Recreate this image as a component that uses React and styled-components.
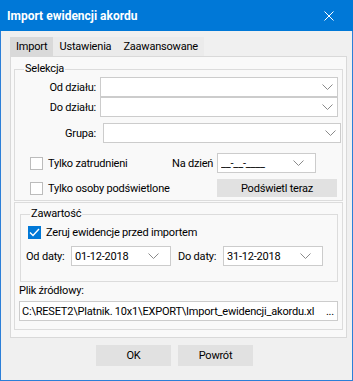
import React from 'react';
import styled, { createGlobalStyle } from 'styled-components';

const GlobalStyle = createGlobalStyle`
  html, body { margin: 0; padding: 0; }
  body {
    background: #f0f0f0;
    font-family: Roboto, "Liberation Sans", Arial, sans-serif;
    font-size: 11px;
    letter-spacing: -0.2px;
    color: #000;
  }
  * { box-sizing: border-box; }
`;

const Window = styled.div`
  width: 353px;
  height: 381px;
  display: flex;
  flex-direction: column;
  background: #f0f0f0;
  overflow: hidden;
`;

const TitleBar = styled.div`
  height: 31px;
  flex: none;
  background: #0078d7;
  color: #fff;
  display: flex;
  align-items: center;
  padding: 0 19px 0 7px;
`;

const Title = styled.div`
  flex: 1;
  font-weight: bold;
  font-size: 12px;
  letter-spacing: 0;
  white-space: nowrap;
`;

const Client = styled.div`
  flex: 1;
  display: flex;
  flex-direction: column;
  border: 1px solid #2b7fd8;
  border-top: none;
  padding: 6px 5px 0 9px;
`;

const TabStrip = styled.div`
  display: flex;
  height: 19px;
  flex: none;
`;

const Tab = styled.div`
  display: flex;
  align-items: center;
  padding: 0 6px;
  background: ${p => (p.$active ? '#d9d9d9' : '#ebebeb')};
  white-space: nowrap;
`;

const Panel = styled.div`
  height: 282px;
  flex: none;
  border: 1px solid #d9d9d9;
  background: #f9f9f9;
  padding: 5px 3px 0 3px;
  display: flex;
  flex-direction: column;
`;

const GroupBox = styled.fieldset`
  margin: 0 0 0 ${p => p.$indent || 0}px;
  padding: 0 0 ${p => p.$padBottom || 0}px 0;
  border: 1px solid #dcdcdc;
  min-width: 0;
  display: flex;
  flex-direction: column;
`;

const Legend = styled.legend`
  margin-left: 9px;
  padding: 0 1px;
  line-height: 14px;
`;

const Frame = styled.div`
  margin-top: 1px;
  border: 1px solid #dcdcdc;
  padding: 4px 4px 8px 4px;
  display: flex;
  flex-direction: column;
`;

const FieldRow = styled.div`
  display: flex;
  align-items: center;
  height: 20px;
  margin-top: ${p => p.$top || 0}px;
  padding-left: ${p => p.$left || 0}px;
`;

const FieldLabel = styled.div`
  width: ${p => p.$width}px;
  padding-right: ${p => p.$gap || 0}px;
  padding-left: ${p => p.$lead || 0}px;
  text-align: ${p => p.$align || 'right'};
  white-space: nowrap;
  flex: none;
`;

const Box = styled.div`
  width: ${p => (p.$width ? `${p.$width}px` : 'auto')};
  flex: ${p => (p.$width ? 'none' : '1')};
  height: 20px;
  background: #fff;
  border: 1px solid #cccccc;
  display: flex;
  align-items: center;
  padding: 0 ${p => p.$padRight || 4}px 0 ${p => p.$padLeft || 3}px;
  white-space: nowrap;
  overflow: hidden;
`;

const BoxText = styled.span`
  flex: 1;
  overflow: hidden;
`;

const Chevron = () => (
  <svg width="11" height="6" viewBox="0 0 11 6">
    <polyline points="0.5,0.5 5.5,5.5 10.5,0.5" fill="none" stroke="#8a8a8a" strokeWidth="1" />
  </svg>
);

const CheckGrid = styled.div`
  display: grid;
  grid-template-columns: 142px 45px 120px;
  grid-template-rows: 20px 18px;
  row-gap: 6px;
  align-items: center;
  margin-top: 10px;
  padding-left: 15px;
  padding-bottom: 3px;
`;

const CheckLabel = styled.label`
  display: flex;
  align-items: center;
  gap: 5px;
  white-space: nowrap;
  height: 16px;
  margin-top: ${p => p.$top || 0}px;
  padding-left: ${p => p.$left || 0}px;
  grid-column: ${p => p.$span || 'auto'};
`;

const CheckBoxMark = styled.span`
  width: 13px;
  height: 13px;
  flex: none;
  border: 1px solid ${p => (p.$checked ? '#0078d7' : '#bcbcbc')};
  background: ${p => (p.$checked ? '#0078d7' : '#fff')};
  display: flex;
  align-items: center;
  justify-content: center;
`;

const CheckBox = ({ checked }) => (
  <CheckBoxMark $checked={checked}>
    {checked && (
      <svg width="11" height="11" viewBox="0 0 11 11">
        <polyline points="1,5.5 4,8.5 10,2" fill="none" stroke="#fff" strokeWidth="1.4" />
      </svg>
    )}
  </CheckBoxMark>
);

const GrayButton = styled.div`
  width: ${p => p.$width}px;
  height: ${p => p.$height}px;
  background: #e1e1e1;
  display: flex;
  align-items: center;
  justify-content: center;
  white-space: nowrap;
`;

const Caption = styled.div`
  line-height: 14px;
  margin-top: ${p => p.$top || 0}px;
  white-space: nowrap;
`;

const ButtonRow = styled.div`
  display: flex;
  gap: 7px;
  margin-top: 7px;
  padding-left: 86px;
`;

const DateBox = ({ value, width = 100 }) => (
  <Box $width={width} $padRight={11}>
    <BoxText>{value}</BoxText>
    <Chevron />
  </Box>
);

const Combo = ({ width = 238 }) => (
  <Box $width={width} $padRight={4}>
    <BoxText />
    <Chevron />
  </Box>
);

export default function App() {
  return (
    <>
      <GlobalStyle />
      <Window>
        <TitleBar>
          <Title>Import ewidencji akordu</Title>
          <svg width="10" height="10" viewBox="0 0 10 10">
            <path d="M0.5 0.5 L9.5 9.5 M9.5 0.5 L0.5 9.5" stroke="#fff" strokeWidth="1" fill="none" />
          </svg>
        </TitleBar>
        <Client>
          <TabStrip>
            <Tab $active>Import</Tab>
            <Tab>Ustawienia</Tab>
            <Tab>Zaawansowane</Tab>
          </TabStrip>
          <Panel>
            <GroupBox>
              <Legend>Selekcja</Legend>
              <FieldRow $top={1}>
                <FieldLabel $width={85} $gap={4}>Od działu:</FieldLabel>
                <Combo />
              </FieldRow>
              <FieldRow>
                <FieldLabel $width={85} $gap={4}>Do działu:</FieldLabel>
                <Combo />
              </FieldRow>
              <FieldRow $top={6}>
                <FieldLabel $width={88} $gap={7}>Grupa:</FieldLabel>
                <Combo />
              </FieldRow>
              <CheckGrid>
                <CheckLabel>
                  <CheckBox />
                  Tylko zatrudnieni
                </CheckLabel>
                <FieldLabel $width={45} $align="left">Na dzień</FieldLabel>
                <DateBox value="__-__-____" width={99} />
                <CheckLabel $span="1 / 3">
                  <CheckBox />
                  Tylko osoby podświetlone
                </CheckLabel>
                <GrayButton $width={120} $height={18}>Podświetl teraz</GrayButton>
              </CheckGrid>
            </GroupBox>
            <Frame>
              <GroupBox $indent={1} $padBottom={15}>
                <Legend>Zawartość</Legend>
                <CheckLabel $top={3} $left={7}>
                  <CheckBox checked />
                  Zeruj ewidencje przed importem
                </CheckLabel>
                <FieldRow $top={6} $left={5}>
                  <FieldLabel $width={45} $align="left">Od daty:</FieldLabel>
                  <DateBox value="01-12-2018" />
                  <FieldLabel $width={52} $lead={7} $align="left">Do daty:</FieldLabel>
                  <DateBox value="31-12-2018" />
                </FieldRow>
              </GroupBox>
              <Caption $top={2}>Plik źródłowy:</Caption>
              <FieldRow $top={3}>
                <Box $padLeft={2} $padRight={3}>
                  <BoxText>C:\RESET2\Platnik. 10x1\EXPORT\Import_ewidencji_akordu.xl</BoxText>
                  <span>&nbsp;...</span>
                </Box>
              </FieldRow>
            </Frame>
          </Panel>
          <ButtonRow>
            <GrayButton $width={75} $height={21}>OK</GrayButton>
            <GrayButton $width={75} $height={21}>Powrót</GrayButton>
          </ButtonRow>
        </Client>
      </Window>
    </>
  );
}
